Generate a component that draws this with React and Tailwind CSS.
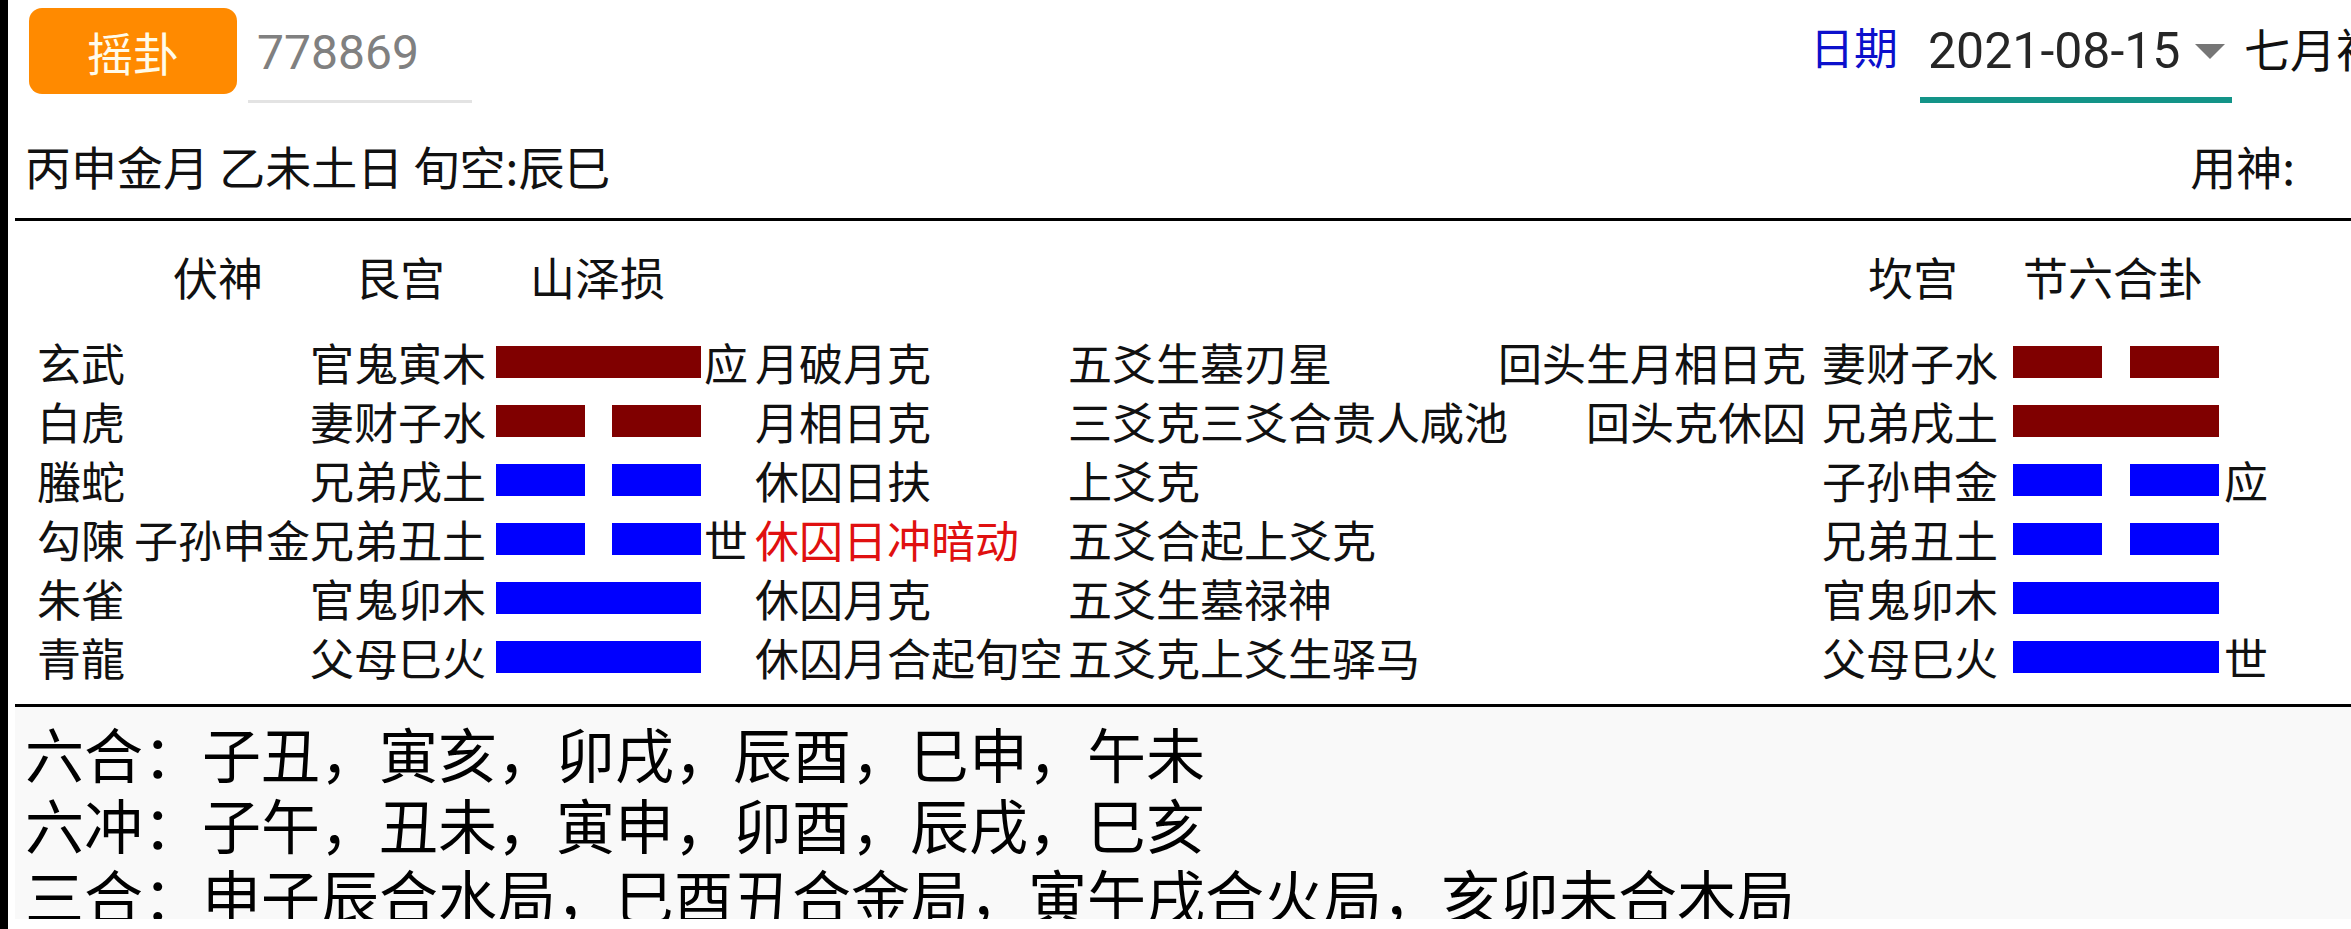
import React from "react";

const RED = "bg-[#800000]";
const BLUE = "bg-[#0000ff]";

const ROWS = [
  { god: "玄武", fu: "", qin: "官鬼寅木", yang: true, color: RED, mark: "应", ws: "月破月克", ss: "五爻生墓刃星", rel: "回头生月相日克", bq: "妻财子水", byang: false, bcolor: RED, bmark: "" },
  { god: "白虎", fu: "", qin: "妻财子水", yang: false, color: RED, mark: "", ws: "月相日克", ss: "三爻克三爻合贵人咸池", rel: "回头克休囚", bq: "兄弟戌土", byang: true, bcolor: RED, bmark: "" },
  { god: "螣蛇", fu: "", qin: "兄弟戌土", yang: false, color: BLUE, mark: "", ws: "休囚日扶", ss: "上爻克", rel: "", bq: "子孙申金", byang: false, bcolor: BLUE, bmark: "应" },
  { god: "勾陳", fu: "子孙申金", qin: "兄弟丑土", yang: false, color: BLUE, mark: "世", ws: "休囚日冲暗动", hot: true, ss: "五爻合起上爻克", rel: "", bq: "兄弟丑土", byang: false, bcolor: BLUE, bmark: "" },
  { god: "朱雀", fu: "", qin: "官鬼卯木", yang: true, color: BLUE, mark: "", ws: "休囚月克", ss: "五爻生墓禄神", rel: "", bq: "官鬼卯木", byang: true, bcolor: BLUE, bmark: "" },
  { god: "青龍", fu: "", qin: "父母巳火", yang: true, color: BLUE, mark: "", ws: "休囚月合起旬空", ss: "五爻克上爻生驿马", rel: "", bq: "父母巳火", byang: true, bcolor: BLUE, bmark: "世" },
];

// one yao line: solid for yang, split for yin
const Bar = ({ yang, color, width }) =>
  yang ? (
    <div className={`${width} h-[32px] ${color}`} />
  ) : (
    <div className={`${width} h-[32px] flex justify-between`}>
      <div className={`w-[89px] h-full ${color}`} />
      <div className={`w-[89px] h-full ${color}`} />
    </div>
  );

const YaoRow = ({ row }) => (
  <div className="h-[59px] flex items-center pl-[29px] whitespace-nowrap">
    <div className="w-[97px] shrink-0">{row.god}</div>
    <div className="w-[176px] shrink-0">{row.fu}</div>
    <div className="w-[176px] shrink-0">{row.qin}</div>
    <div className="ml-[10px] shrink-0">
      <Bar yang={row.yang} color={row.color} width="w-[205px]" />
    </div>
    <div className="ml-[3px] w-[44px] shrink-0">{row.mark}</div>
    <div className={`ml-[7px] w-[313px] shrink-0 ${row.hot ? "text-[#e01010]" : ""}`}>{row.ws}</div>
    <div className="w-[430px] shrink-0">{row.ss}</div>
    <div className="w-[308px] shrink-0 text-right">{row.rel}</div>
    <div className="ml-[16px] w-[176px] shrink-0">{row.bq}</div>
    <div className="ml-[15px] shrink-0">
      <Bar yang={row.byang} color={row.bcolor} width="w-[206px]" />
    </div>
    <div className="ml-[5px] w-[44px] shrink-0">{row.bmark}</div>
  </div>
);

export default function App() {
  return (
    <div className="w-[2351px] h-[929px] overflow-hidden bg-white flex text-[#111] font-['Noto_Sans_CJK_SC',sans-serif]">
      {/* left edge */}
      <div className="w-[8px] shrink-0 bg-black" />

      <div className="flex-1 min-w-0 flex flex-col">
        {/* top bar */}
        <div className="h-[104px] shrink-0 flex items-start whitespace-nowrap">
          <button className="shrink-0 ml-[21px] mt-[8px] w-[208px] h-[86px] rounded-[13px] bg-[#ff8a00] flex items-center justify-center text-[46px] leading-none text-[#fffbea]">
            摇卦
          </button>
          <div className="shrink-0 ml-[11px] mt-[5px] w-[224px] h-[98px] border-b-[3px] border-[#e3e3e3] flex items-center pl-[9px] font-['Roboto',sans-serif] text-[48px] text-[#808080]">
            778869
          </div>
          <div className="shrink-0 ml-[1338px] h-[104px] flex items-start">
            <div className="mt-[24px] text-[44px] leading-none text-[#0c10cc]">日期</div>
            <div className="ml-[22px] mt-[5px] w-[312px] h-[98px] border-b-[6px] border-[#139488] flex items-center pl-[8px] font-['Roboto',sans-serif] text-[50px] text-[#262626]">
              <span>2021-08-15</span>
              <svg className="ml-[15px]" width="30" height="15" viewBox="0 0 30 15">
                <polygon points="0,0 30,0 15,15" fill="#767676" />
              </svg>
            </div>
            <div className="ml-[12px] mt-[24px] text-[46px] leading-none">七月初八</div>
          </div>
        </div>

        {/* ganzhi line */}
        <div className="h-[114px] shrink-0 flex items-center justify-between pl-[17px] pr-[56px] pt-[8px] text-[46px]">
          <div>丙申金月 乙未土日 旬空:辰巳</div>
          <div>用神:</div>
        </div>

        <div className="ml-[7px] h-[3px] shrink-0 bg-black" />

        {/* headings */}
        <div className="h-[111px] shrink-0 flex items-center text-[45px] whitespace-nowrap">
          <div className="ml-[165px]">伏神</div>
          <div className="ml-[92px]">艮宫</div>
          <div className="ml-[85px]">山泽损</div>
          <div className="ml-[1203px]">坎宫</div>
          <div className="ml-[65px]">节六合卦</div>
        </div>

        {/* yao rows */}
        <div className="shrink-0 flex flex-col text-[44px]">
          {ROWS.map((row) => (
            <YaoRow key={row.god} row={row} />
          ))}
        </div>

        <div className="mt-[18px] ml-[7px] h-[3px] shrink-0 bg-black" />

        {/* reference notes, clipped like a scroll view */}
        <div className="ml-[7px] h-[212px] shrink-0 overflow-hidden bg-[#f9f9f9] pl-[10px] pt-[10px] text-[59px] leading-[71px] text-black whitespace-nowrap">
          <div>六合：子丑，寅亥，卯戌，辰酉，巳申，午未</div>
          <div>六冲：子午，丑未，寅申，卯酉，辰戌，巳亥</div>
          <div>三合：申子辰合水局，巳酉丑合金局，寅午戌合火局，亥卯未合木局</div>
        </div>
      </div>
    </div>
  );
}
